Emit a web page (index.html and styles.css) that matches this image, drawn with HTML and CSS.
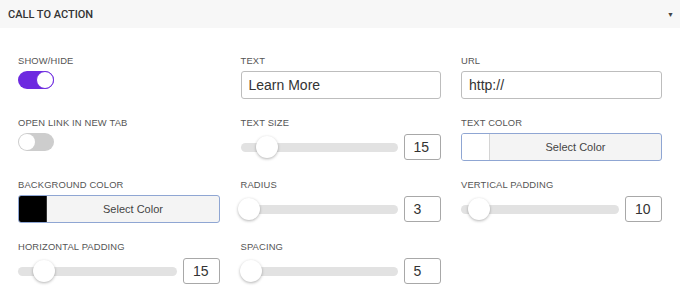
FILE: index.html
```html
<!DOCTYPE html>
<html lang="en">
<head>
  <meta charset="UTF-8" />
  <title>Call to Action</title>
  <link rel="stylesheet" href="styles.css">
</head>
<body>

  <div class="panel">
    <!-- Panel header -->
    <div class="panel-header">
      <span class="panel-title">CALL TO ACTION</span>
      <span class="caret">&#9660;</span>
    </div>

    <div class="panel-body">
      <div class="field">
        <div class="label">SHOW/HIDE</div>
        <div class="control">
          <span class="toggle on"><span class="knob"></span></span>
        </div>
      </div>
      <div class="field">
        <div class="label">TEXT</div>
        <div class="control">
          <input type="text" class="text-input" value="Learn More" />
        </div>
      </div>
      <div class="field">
        <div class="label">URL</div>
        <div class="control">
          <input type="text" class="text-input" value="http://" />
        </div>
      </div>

      <div class="field">
        <div class="label">OPEN LINK IN NEW TAB</div>
        <div class="control">
          <span class="toggle"><span class="knob"></span></span>
        </div>
      </div>
      <div class="field">
        <div class="label">TEXT SIZE</div>
        <div class="control slider-row">
          <div class="track"><span class="thumb" style="left: 15px"></span></div>
          <div class="num">15</div>
        </div>
      </div>
      <div class="field">
        <div class="label">TEXT COLOR</div>
        <div class="control">
          <div class="color-btn"><span class="swatch"></span><span class="color-label">Select Color</span></div>
        </div>
      </div>

      <div class="field">
        <div class="label">BACKGROUND COLOR</div>
        <div class="control">
          <div class="color-btn"><span class="swatch dark"></span><span class="color-label">Select Color</span></div>
        </div>
      </div>
      <div class="field">
        <div class="label">RADIUS</div>
        <div class="control slider-row">
          <div class="track"><span class="thumb" style="left: -3px"></span></div>
          <div class="num">3</div>
        </div>
      </div>
      <div class="field">
        <div class="label">VERTICAL PADDING</div>
        <div class="control slider-row">
          <div class="track"><span class="thumb" style="left: 7px"></span></div>
          <div class="num">10</div>
        </div>
      </div>

      <div class="field">
        <div class="label">HORIZONTAL PADDING</div>
        <div class="control slider-row">
          <div class="track"><span class="thumb" style="left: 15px"></span></div>
          <div class="num">15</div>
        </div>
      </div>
      <div class="field">
        <div class="label">SPACING</div>
        <div class="control slider-row">
          <div class="track"><span class="thumb" style="left: -1px"></span></div>
          <div class="num">5</div>
        </div>
      </div>
    </div>
  </div>

</body>
</html>
```

FILE: styles.css
```css
* {
  box-sizing: border-box;
}

body {
  margin: 0;
  background: #fff;
  font-family: 'Liberation Sans', Arial, sans-serif;
  color: #333;
}

.panel {
  width: 680px;
  height: 300px;
  overflow: hidden;
}

.panel-header {
  height: 28px;
  background: #f7f7f7;
  display: flex;
  align-items: center;
  justify-content: space-between;
  padding: 0 6px 0 8px;
}

.panel-title {
  font-family: Roboto, sans-serif;
  font-size: 11px;
  font-weight: 500;
  color: #333;
}

.caret {
  font-size: 7px;
  color: #444;
}

.panel-body {
  display: grid;
  grid-template-columns: 202px 200px 201px;
  column-gap: 20.5px;
  row-gap: 18px;
  padding: 27px 18px 0 18px;
}

.label {
  font-size: 9.4px;
  letter-spacing: 0.15px;
  line-height: 12px;
  color: #555;
  margin-bottom: 4px;
}

.control {
  height: 28px;
}

/* toggles */
.toggle {
  display: block;
  position: relative;
  width: 36px;
  height: 18px;
  margin-top: 3px;
  border-radius: 9px;
  background: #cdcdcd;
}

.toggle .knob {
  position: absolute;
  top: 1px;
  left: 1px;
  width: 16px;
  height: 16px;
  border-radius: 50%;
  background: #fff;
}

.toggle.on {
  background: #6d2ae0;
}

.toggle.on .knob {
  left: auto;
  right: 0;
  top: 0;
  width: 18px;
  height: 18px;
  border: 1.5px solid #6d2ae0;
}

/* text inputs */
.text-input {
  width: 100%;
  height: 28px;
  border: 1px solid #bdbdbd;
  border-radius: 3px;
  padding: 0 7px;
  font-family: 'Liberation Sans', Arial, sans-serif;
  font-size: 14px;
  color: #333;
}

/* sliders */
.slider-row {
  display: flex;
  align-items: center;
  gap: 6px;
}

.track {
  position: relative;
  flex: 1;
  height: 9px;
  border-radius: 5px;
  background: #e2e2e2;
}

.thumb {
  position: absolute;
  top: -7px;
  width: 22px;
  height: 22px;
  border-radius: 50%;
  background: #fff;
  box-shadow: 0 1px 3px rgba(0, 0, 0, 0.3);
}

.num {
  width: 37px;
  height: 26px;
  border: 1px solid #a8a8a8;
  border-radius: 3px;
  display: flex;
  align-items: center;
  padding-left: 9px;
  font-size: 14px;
  color: #333;
}

/* color pickers */
.color-btn {
  display: flex;
  height: 28px;
  border: 1px solid #8fa6d3;
  border-radius: 3px;
  background: #f4f4f4;
  overflow: hidden;
}

.swatch {
  width: 28px;
  background: #fff;
  border-right: 1px solid #d4d4d4;
}

.swatch.dark {
  background: #000;
  border-right: 1px solid #333;
}

.color-label {
  flex: 1;
  display: flex;
  align-items: center;
  justify-content: center;
  font-size: 11px;
  color: #444;
}
```
